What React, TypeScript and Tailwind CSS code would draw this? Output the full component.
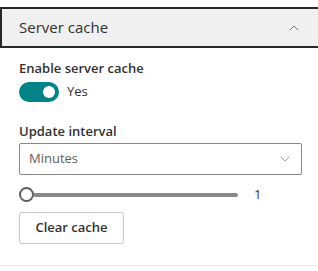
import { ChevronUp, ChevronDown } from "lucide-react";

export default function App() {
  return (
    <div className="w-[318px] h-[271px] bg-white overflow-hidden font-['Open_Sans',sans-serif] text-[#323130]">
      {/* Section header */}
      <div className="pt-[7px] w-[330px]">
        <div className="flex h-[41px] items-center justify-between border-2 border-[#292929] bg-[#f0f0f0] pl-[17px] pr-[26px]">
          <span className="text-[15px] text-[#323130]">Server cache</span>
          <ChevronUp className="h-4 w-4 text-[#7a7a7a]" strokeWidth={1.5} />
        </div>
      </div>

      <div className="px-[19px] pt-[11px]">
        {/* Toggle */}
        <p className="text-[13px] font-semibold leading-[18px]">Enable server cache</p>
        <div className="mt-[5px] flex items-center gap-2">
          <div className="flex h-5 w-10 items-center justify-end rounded-full bg-[#038387] pr-[4px]">
            <div className="h-3 w-3 rounded-full bg-white" />
          </div>
          <span className="text-[13px]">Yes</span>
        </div>

        {/* Interval */}
        <p className="mt-[20px] text-[13px] font-semibold leading-[18px]">Update interval</p>
        <div className="mt-[3px] flex h-8 w-[283px] items-center justify-between rounded-[2px] border border-[#8a8886] pl-[9px] pr-[8px]">
          <span className="text-[13px] text-[#605e5c]">Minutes</span>
          <ChevronDown className="h-4 w-4 text-[#8a8886]" strokeWidth={1.2} />
        </div>

        {/* Slider */}
        <div className="mt-[10px] flex items-center">
          <div className="flex w-[219px] items-center">
            <div className="h-[15px] w-[15px] shrink-0 rounded-full border-2 border-[#605e5c] bg-white" />
            <div className="h-1 flex-1 rounded-r-full bg-[#8a8886]" />
          </div>
          <span className="ml-[16px] text-[13px] text-[#323130]">1</span>
        </div>

        {/* Button */}
        <button className="mt-[7px] h-8 w-[105px] rounded-[3px] border border-[#c8c6c4] bg-white text-[13px] font-semibold text-[#323130]">
          Clear cache
        </button>
      </div>

      <div className="mt-[21px] h-px w-full bg-[#edebe9]" />
    </div>
  );
}
